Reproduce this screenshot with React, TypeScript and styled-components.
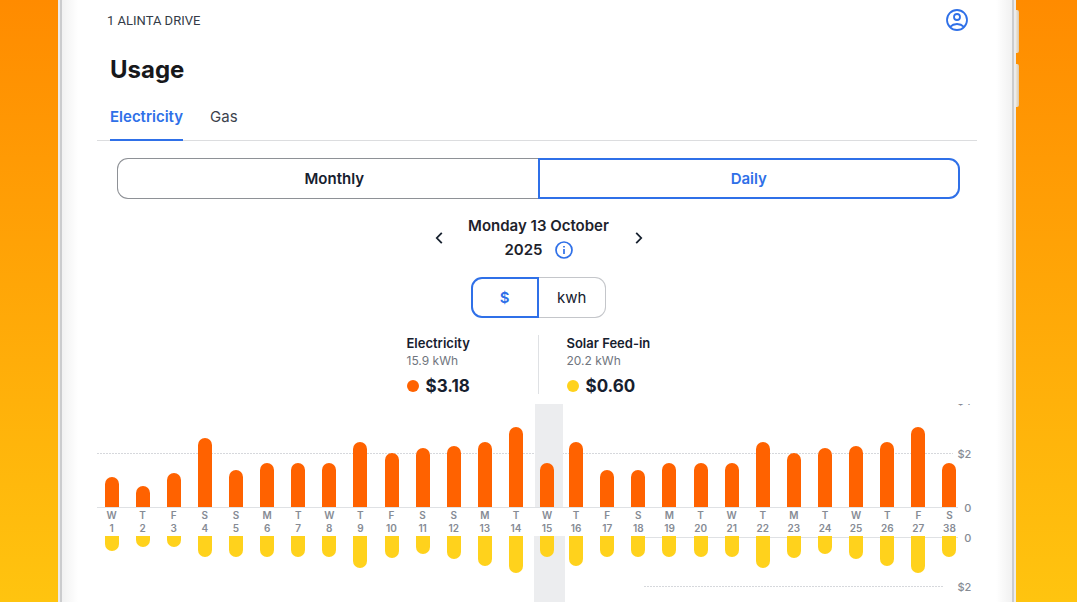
import React from 'react';
import styled, { createGlobalStyle, css } from 'styled-components';

const blue = '#2f70e8';
const ink = '#16202e';
const grey = '#868b94';

const GlobalStyle = createGlobalStyle`
  * { box-sizing: border-box; }
  body { margin: 0; font-family: Inter, "Liberation Sans", sans-serif; color: ${ink}; }
  button { font: inherit; color: inherit; background: none; border: 0; padding: 0; cursor: pointer; }
  h1, h2, p { margin: 0; }
`;

const Backdrop = styled.div`
  display: flex;
  min-height: 100vh;
  padding: 0 58px;
  background: linear-gradient(#ff8b00, #ffc40f);
`;

const Device = styled.div`
  flex: 1;
  min-width: 0;
  display: flex;
  background: #fff;
  border-left: 2px solid #ececec;
  border-right: 2px solid #ececec;
`;

const Screen = styled.main`
  flex: 1;
  min-width: 0;
  display: flex;
  flex-direction: column;
  padding: 0 35px;
  border-left: 2px solid #cbccce;
  border-right: 2px solid #cbccce;
  background: linear-gradient(90deg, #f1f1f1, #fff 16px, #fff calc(100% - 16px), #f1f1f1);
`;

const SideButtons = styled.div`
  display: flex;
  flex-direction: column;
  gap: 11px;
  width: 3px;
  padding-top: 10px;
`;

const SideButton = styled.span`
  height: 43px;
  border-radius: 0 2px 2px 0;
  background: linear-gradient(90deg, #efe6d8, #d8c8b0);
`;

const TopBar = styled.header`
  display: flex;
  align-items: center;
  justify-content: space-between;
  height: 40px;
  padding: 0 9px 0 10px;
`;

const Address = styled.p`
  padding-top: 1px;
  font: 400 13px/20px Roboto, sans-serif;
  color: #333b47;
`;

const IconButton = styled.button`
  display: grid;
  place-items: center;
  svg { display: block; fill: none; stroke: currentColor; }
`;

const AccountButton = styled(IconButton)`
  color: ${blue};
`;

const Title = styled.h1`
  margin: 14px 0 0 13px;
  font-size: 24px;
  line-height: 32px;
  font-weight: 700;
  color: #17181b;
`;

const Tabs = styled.nav`
  display: flex;
  gap: 27px;
  margin-top: 6px;
  padding-left: 13px;
  border-bottom: 1px solid #dcdddf;
`;

const Tab = styled.button<{ $active?: boolean }>`
  height: 49px;
  margin-bottom: -1px;
  padding-top: 2px;
  font-size: 15px;
  line-height: 20px;
  color: #3b424d;
  border-bottom: 2px solid transparent;
  ${p => p.$active && css`
    color: ${blue};
    font-weight: 600;
    border-color: ${blue};
  `}
`;

const Panel = styled.div`
  padding: 17px 17px 0 20px;
`;

const Segments = styled.div`
  display: grid;
  grid-template-columns: 1fr 1fr;
`;

const UnitSegments = styled(Segments)`
  width: 135px;
  margin: 15px auto 0;
`;

const Segment = styled.button<{ $active?: boolean; $light?: boolean }>`
  height: 41px;
  font-size: 15px;
  line-height: 20px;
  font-weight: ${p => (p.$light ? 400 : 600)};
  border: 1px solid ${p => (p.$light ? '#c4c6ca' : '#8e9196')};
  &:first-child { border-radius: 11px 0 0 11px; border-right-width: 0; }
  &:last-child { border-radius: 0 11px 11px 0; border-left-width: 0; }
  &&& {
    ${p => p.$active && css`border: 2px solid ${blue}; color: ${blue};`}
  }
`;

const PeriodSegments = styled(Segments)`
  ${Segment}:first-child { padding-left: 12px; }
  ${Segment}:last-child { margin-left: -1px; }
`;

const DatePicker = styled.div`
  display: flex;
  align-items: center;
  justify-content: center;
  gap: 16px;
  margin-top: 15px;
`;

const DateText = styled.h2`
  width: 160px;
  text-align: center;
  font-size: 15px;
  line-height: 24px;
  font-weight: 600;
  color: #1d222b;
`;

const YearRow = styled.span`
  display: flex;
  align-items: center;
  justify-content: center;
  gap: 12px;
`;

const InfoButton = styled(IconButton)`
  color: ${blue};
`;

const Summary = styled.section`
  display: grid;
  grid-template-columns: 1fr 1fr;
  margin-top: 17px;
`;

const Total = styled.div`
  height: 59px;
  &:first-child {
    display: flex;
    flex-direction: column;
    align-items: flex-end;
    border-right: 1px solid #dfe1e4;
  }
  &:last-child { padding-left: 28px; }
`;

const TotalBody = styled.div`
  width: 131px;
`;

const TotalName = styled.p`
  font-size: 13px;
  line-height: 16px;
  font-weight: 600;
`;

const TotalEnergy = styled.p`
  font-size: 12px;
  line-height: 20px;
  color: #70757e;
`;

const TotalCost = styled.p<{ $color: string }>`
  display: flex;
  align-items: center;
  gap: 7px;
  margin-top: 3px;
  font-size: 17px;
  line-height: 24px;
  font-weight: 700;
  &::before {
    content: "";
    width: 12px;
    height: 12px;
    border-radius: 50%;
    background: ${p => p.$color};
  }
`;

const Chart = styled.section`
  flex: 1;
  display: grid;
  grid-template-columns: 1fr 14px;
  margin-top: 10px;
  padding-right: 6px;
  overflow: hidden;
`;

const Plot = styled.div`
  display: grid;
  margin: 0 -8px 0 -1px;
  > * { grid-area: 1 / 1; }
`;

const Lines = styled.div`
  display: grid;
  grid-template-rows: 50px 54px 30px 49px 1fr;
  padding: 0 7px 0 1px;
`;

const Line = styled.span<{ $dotted?: boolean; $short?: boolean }>`
  align-self: end;
  height: 1px;
  background: ${p => (p.$dotted
    ? 'repeating-linear-gradient(90deg, #d6d8dc 0 2px, transparent 2px 3px)'
    : '#dfe1e4')};
  ${p => p.$short && css`margin-left: calc(63% + 5px);`}
  ${p => p.$dotted && css`margin-right: ${p.$short ? '15px' : '5px'};`}
`;

const Halves = styled.div`
  display: flex;
`;

const Half = styled.div<{ $days: number }>`
  flex: ${p => p.$days} 1 0;
  display: grid;
  grid-template-columns: repeat(${p => p.$days}, minmax(0, 1fr));
  & + & { margin-left: -2px; }
`;

const Day = styled.div`
  display: grid;
  grid-template-rows: 103px 29px 1fr;
  justify-items: center;
`;

const Shade = styled.span<{ $row: number }>`
  grid-area: ${p => p.$row} / 1;
  justify-self: end;
  width: ${p => (p.$row === 1 ? '28px' : '31px')};
  margin-right: ${p => (p.$row === 1 ? '0' : '-2px')};
  background: #ecedef;
`;

const Bar = styled.span<{ $solar?: boolean }>`
  grid-area: ${p => (p.$solar ? 3 : 1)} / 1;
  align-self: ${p => (p.$solar ? 'start' : 'end')};
  width: 14px;
  border-radius: ${p => (p.$solar ? '0 0 7px 7px' : '7px 7px 0 0')};
  background: ${p => (p.$solar ? '#ffd21c' : '#ff6200')};
`;

const DayLabel = styled.span`
  grid-area: 2 / 1;
  padding-top: 2px;
  text-align: center;
  font-size: 10px;
  line-height: 13px;
  font-weight: 600;
  color: ${grey};
`;

const Scale = styled.div`
  display: grid;
  grid-template-rows: 53px 54px 30px 49px;
  align-content: start;
  margin-top: -10px;
  text-align: right;
  font-size: 11px;
  line-height: 14px;
  font-weight: 500;
  color: ${grey};
`;

type DayUsage = { day: string; date: number; used: number; solar: number };

const letters = 'WTFSSMTWTFSSMTWTFSMTWTMTWTFS';
const used = [30, 21, 34, 69, 37, 44, 44, 44, 65, 54, 59, 61, 65, 80, 44, 65, 37, 37, 44, 44, 44, 65, 54, 59, 61, 65, 80, 44];
const solar = [15, 11, 11, 21, 21, 21, 21, 21, 32, 22, 18, 23, 30, 37, 21, 30, 21, 21, 21, 21, 21, 32, 22, 18, 23, 30, 37, 21];

const days: DayUsage[] = used.map((value, i) => ({
  day: letters[i],
  date: i === 27 ? 38 : i + 1,
  used: value,
  solar: solar[i],
}));

const selectedDate = 15;
const halves = [days.slice(0, 15), days.slice(15)];

function DayColumn({ item }: { item: DayUsage }) {
  return (
    <Day>
      {item.date === selectedDate && <><Shade $row={1} /><Shade $row={3} /></>}
      <Bar style={{ height: item.used }} />
      <DayLabel>{item.day}<br />{item.date}</DayLabel>
      <Bar $solar style={{ height: item.solar }} />
    </Day>
  );
}

function Chevron({ d }: { d: string }) {
  return (
    <svg width="8" height="14" viewBox="0 0 8 14" strokeWidth="1.8">
      <path d={d} />
    </svg>
  );
}

export default function App() {
  return (
    <Backdrop>
      <GlobalStyle />
      <Device>
        <Screen>
          <TopBar>
            <Address>1 ALINTA DRIVE</Address>
            <AccountButton aria-label="Account">
              <svg width="22" height="22" viewBox="0 0 22 22" strokeWidth="1.8">
                <circle cx="11" cy="11" r="10" />
                <circle cx="11" cy="8" r="3" />
                <path d="M4 17.800C6 15.900 8.200 15 11 15s5 .9 7 2.800" />
              </svg>
            </AccountButton>
          </TopBar>
          <Title>Usage</Title>
          <Tabs>
            <Tab $active>Electricity</Tab>
            <Tab>Gas</Tab>
          </Tabs>
          <Panel>
            <PeriodSegments>
              <Segment>Monthly</Segment>
              <Segment $active>Daily</Segment>
            </PeriodSegments>
            <DatePicker>
              <IconButton aria-label="Previous day"><Chevron d="M6.800 1.800 1.800 7l5 5.200" /></IconButton>
              <DateText>
                Monday 13 October
                <YearRow>
                  2025
                  <InfoButton aria-label="About this date">
                    <svg width="18" height="18" viewBox="0 0 18 18" strokeWidth="1.7">
                      <circle cx="9" cy="9" r="8" />
                      <path d="M9 8v5M9 5v1.600" />
                    </svg>
                  </InfoButton>
                </YearRow>
              </DateText>
              <IconButton aria-label="Next day"><Chevron d="M1.200 1.800 6.200 7l-5 5.200" /></IconButton>
            </DatePicker>
            <UnitSegments>
              <Segment $active>$</Segment>
              <Segment $light>kwh</Segment>
            </UnitSegments>
            <Summary>
              <Total>
                <TotalBody>
                  <TotalName>Electricity</TotalName>
                  <TotalEnergy>15.9 kWh</TotalEnergy>
                  <TotalCost $color="#ff6200">$3.18</TotalCost>
                </TotalBody>
              </Total>
              <Total>
                <TotalName>Solar Feed-in</TotalName>
                <TotalEnergy>20.2 kWh</TotalEnergy>
                <TotalCost $color="#ffd21c">$0.60</TotalCost>
              </Total>
            </Summary>
          </Panel>
          <Chart>
            <Plot>
              <Lines>
                <Line $dotted />
                <Line />
                <Line $short />
                <Line $dotted $short />
              </Lines>
              <Halves>
                {halves.map(half => (
                  <Half key={half[0].date} $days={half.length}>
                    {half.map(item => <DayColumn key={item.date} item={item} />)}
                  </Half>
                ))}
              </Halves>
            </Plot>
            <Scale>
              <span>$4</span>
              <span>$2</span>
              <span>0</span>
              <span>0</span>
              <span>$2</span>
            </Scale>
          </Chart>
        </Screen>
      </Device>
      <SideButtons>
        <SideButton />
        <SideButton />
      </SideButtons>
    </Backdrop>
  );
}
